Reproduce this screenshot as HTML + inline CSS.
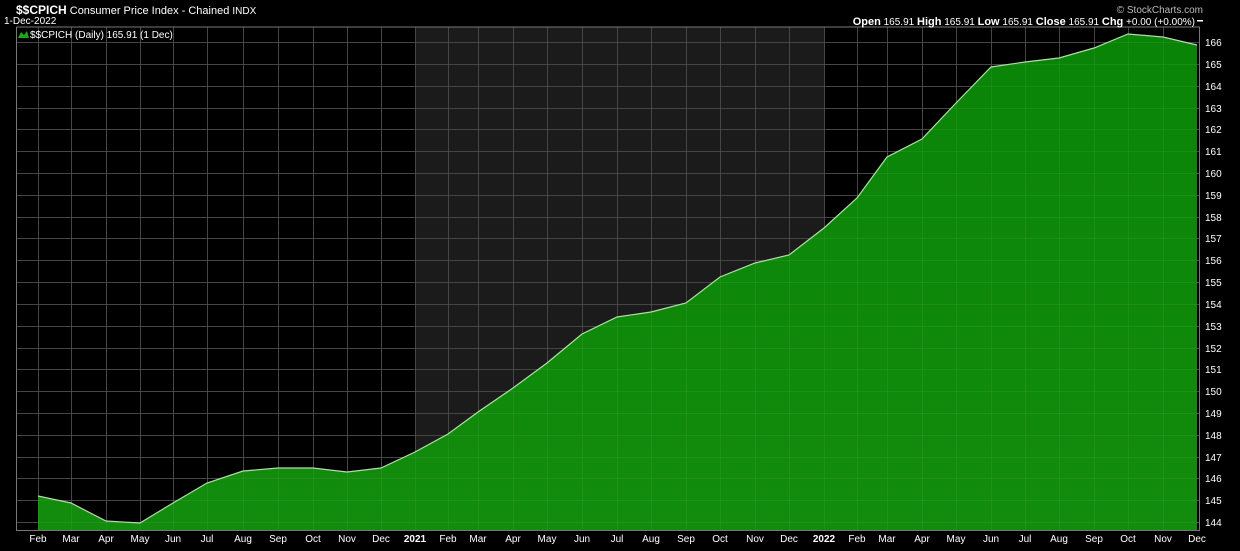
<!DOCTYPE html>
<html><head><style>
body{margin:0;background:#000;width:1240px;height:546px;overflow:hidden;font-family:"Liberation Sans",sans-serif;}
</style></head><body>
<svg width="1240" height="546" xmlns="http://www.w3.org/2000/svg" font-family="Liberation Sans, sans-serif">
<defs><linearGradient id="g" x1="0" y1="0" x2="0" y2="1"><stop offset="0" stop-color="#0a8407"/><stop offset="1" stop-color="#138c0d"/></linearGradient>
<g id="grid">
<path d="M38.5 27V530M71.5 27V530M106.5 27V530M140.5 27V530M173.5 27V530M207.5 27V530M243.5 27V530M278.5 27V530M313.5 27V530M347.5 27V530M381.5 27V530M415.5 27V530M448.5 27V530M478.5 27V530M513.5 27V530M547.5 27V530M582.5 27V530M617.5 27V530M651.5 27V530M686.5 27V530M720.5 27V530M755.5 27V530M789.5 27V530M824.5 27V530M857.5 27V530M887.5 27V530M922.5 27V530M956.5 27V530M991.5 27V530M1025.5 27V530M1059.5 27V530M1094.5 27V530M1128.5 27V530M1163.5 27V530"/>
<path d="M16 42.5H1199M16 64.5H1199M16 86.5H1199M16 108.5H1199M16 129.5H1199M16 151.5H1199M16 173.5H1199M16 195.5H1199M16 217.5H1199M16 238.5H1199M16 260.5H1199M16 282.5H1199M16 304.5H1199M16 326.5H1199M16 348.5H1199M16 369.5H1199M16 391.5H1199M16 413.5H1199M16 435.5H1199M16 457.5H1199M16 478.5H1199M16 500.5H1199M16 522.5H1199"/>
</g></defs>
<rect width="1240" height="546" fill="#000"/>
<rect x="415" y="27" width="409" height="503" fill="#1b1b1b"/>
<use href="#grid" stroke="#3a3a3a" stroke-width="1"/>
<polygon fill="url(#g)" points="38,496 71,503 106,521 140,523 173,503 207,483 243,471 278,468 313,468 347,472 381,468 415,452 448,434 478,412 513,388 547,363 582,334 617,317 651,312 686,303 720,277 755,263 789,255 824,228 857,198 887,157 922,139 956,103 991,67 1025,62 1059,58 1094,48 1128,34 1163,37 1197,45 1197,530 38,530"/>
<use href="#grid" stroke="#ffffff" stroke-opacity="0.06" stroke-width="1"/>
<polyline fill="none" stroke="#b8d8b0" stroke-width="1.2" points="38,496 71,503 106,521 140,523 173,503 207,483 243,471 278,468 313,468 347,472 381,468 415,452 448,434 478,412 513,388 547,363 582,334 617,317 651,312 686,303 720,277 755,263 789,255 824,228 857,198 887,157 922,139 956,103 991,67 1025,62 1059,58 1094,48 1128,34 1163,37 1197,45"/>
<g stroke="#777" fill="none"><path d="M16.5 27V530.5H1199.5V27H16.5"/></g>
<g fill="#fff" font-size="10" text-anchor="start">
<text x="1205" y="46">166</text><text x="1205" y="68">165</text><text x="1205" y="90">164</text><text x="1205" y="112">163</text><text x="1205" y="133">162</text><text x="1205" y="155">161</text><text x="1205" y="177">160</text><text x="1205" y="199">159</text><text x="1205" y="221">158</text><text x="1205" y="242">157</text><text x="1205" y="264">156</text><text x="1205" y="286">155</text><text x="1205" y="308">154</text><text x="1205" y="330">153</text><text x="1205" y="352">152</text><text x="1205" y="373">151</text><text x="1205" y="395">150</text><text x="1205" y="417">149</text><text x="1205" y="439">148</text><text x="1205" y="461">147</text><text x="1205" y="482">146</text><text x="1205" y="504">145</text><text x="1205" y="526">144</text>
</g>
<g fill="#fff" font-size="10" text-anchor="middle">
<text x="38" y="542">Feb</text><text x="71" y="542">Mar</text><text x="106" y="542">Apr</text><text x="140" y="542">May</text><text x="173" y="542">Jun</text><text x="207" y="542">Jul</text><text x="243" y="542">Aug</text><text x="278" y="542">Sep</text><text x="313" y="542">Oct</text><text x="347" y="542">Nov</text><text x="381" y="542">Dec</text><text x="415" y="542" font-weight="bold">2021</text><text x="448" y="542">Feb</text><text x="478" y="542">Mar</text><text x="513" y="542">Apr</text><text x="547" y="542">May</text><text x="582" y="542">Jun</text><text x="617" y="542">Jul</text><text x="651" y="542">Aug</text><text x="686" y="542">Sep</text><text x="720" y="542">Oct</text><text x="755" y="542">Nov</text><text x="789" y="542">Dec</text><text x="824" y="542" font-weight="bold">2022</text><text x="857" y="542">Feb</text><text x="887" y="542">Mar</text><text x="922" y="542">Apr</text><text x="956" y="542">May</text><text x="991" y="542">Jun</text><text x="1025" y="542">Jul</text><text x="1059" y="542">Aug</text><text x="1094" y="542">Sep</text><text x="1128" y="542">Oct</text><text x="1163" y="542">Nov</text><text x="1197" y="542">Dec</text>
</g>
<text x="16" y="14" fill="#fff" font-size="11"><tspan font-weight="bold" font-size="12">$$CPICH</tspan> Consumer Price Index - Chained <tspan font-size="10">INDX</tspan></text>
<text x="4" y="24" fill="#fff" font-size="10">1-Dec-2022</text>
<path d="M18 38 L21 32 L24 35 L27 31 L29 38Z" fill="#1aa81a"/>
<text x="30" y="38" fill="#fff" font-size="10">$$CPICH (Daily) 165.91 (1 Dec)</text>
<text x="1203" y="13" fill="#bbb" font-size="10" text-anchor="end">© StockCharts.com</text>
<text x="1195" y="25" fill="#fff" font-size="10" text-anchor="end"><tspan font-weight="bold" font-size="11">Open</tspan> 165.91 <tspan font-weight="bold" font-size="11">High</tspan> 165.91 <tspan font-weight="bold" font-size="11">Low</tspan> 165.91 <tspan font-weight="bold" font-size="11">Close</tspan> 165.91 <tspan font-weight="bold" font-size="11">Chg</tspan> +0.00 (+0.00%)</text>
<rect x="1197" y="20" width="6" height="1.5" fill="#fff"/>
</svg>
</body></html>
